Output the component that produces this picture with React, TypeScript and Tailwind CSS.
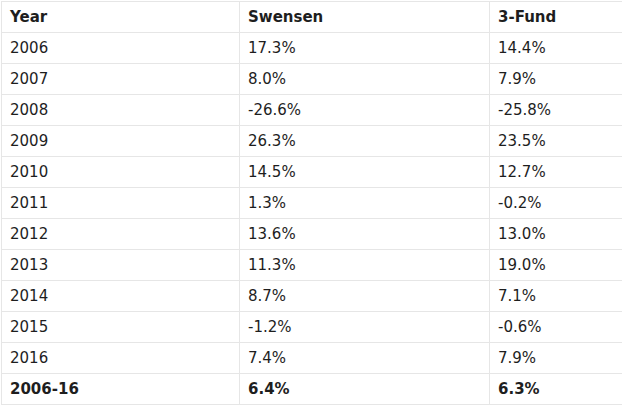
import React from "react";

const rows: [string, string, string][] = [
  ["2006", "17.3%", "14.4%"],
  ["2007", "8.0%", "7.9%"],
  ["2008", "-26.6%", "-25.8%"],
  ["2009", "26.3%", "23.5%"],
  ["2010", "14.5%", "12.7%"],
  ["2011", "1.3%", "-0.2%"],
  ["2012", "13.6%", "13.0%"],
  ["2013", "11.3%", "19.0%"],
  ["2014", "8.7%", "7.1%"],
  ["2015", "-1.2%", "-0.6%"],
  ["2016", "7.4%", "7.9%"],
];

export default function App() {
  return (
    <div className="w-[622px] h-[407px] overflow-hidden bg-white pl-px pt-px">
      <table
        className="table-fixed border-collapse w-[624px] text-[15px] text-[#1e1e1e]"
        style={{ fontFamily: '"DejaVu Sans", Verdana, sans-serif' }}
      >
        <colgroup>
          <col className="w-[238px]" />
          <col className="w-[250px]" />
          <col />
        </colgroup>
        <thead>
          <tr className="h-[31px]">
            <th className="border border-[#e6e6e6] px-2 text-left font-bold">Year</th>
            <th className="border border-[#e6e6e6] px-2 text-left font-bold">Swensen</th>
            <th className="border border-[#e6e6e6] px-2 text-left font-bold">3-Fund</th>
          </tr>
        </thead>
        <tbody>
          {rows.map(([y, s, f]) => (
            <tr key={y} className="h-[31px]">
              <td className="border border-[#e6e6e6] px-2">{y}</td>
              <td className="border border-[#e6e6e6] px-2">{s}</td>
              <td className="border border-[#e6e6e6] px-2">{f}</td>
            </tr>
          ))}
          <tr className="h-[31px] font-bold">
            <td className="border border-[#e6e6e6] px-2">2006-16</td>
            <td className="border border-[#e6e6e6] px-2">6.4%</td>
            <td className="border border-[#e6e6e6] px-2">6.3%</td>
          </tr>
        </tbody>
      </table>
    </div>
  );
}
